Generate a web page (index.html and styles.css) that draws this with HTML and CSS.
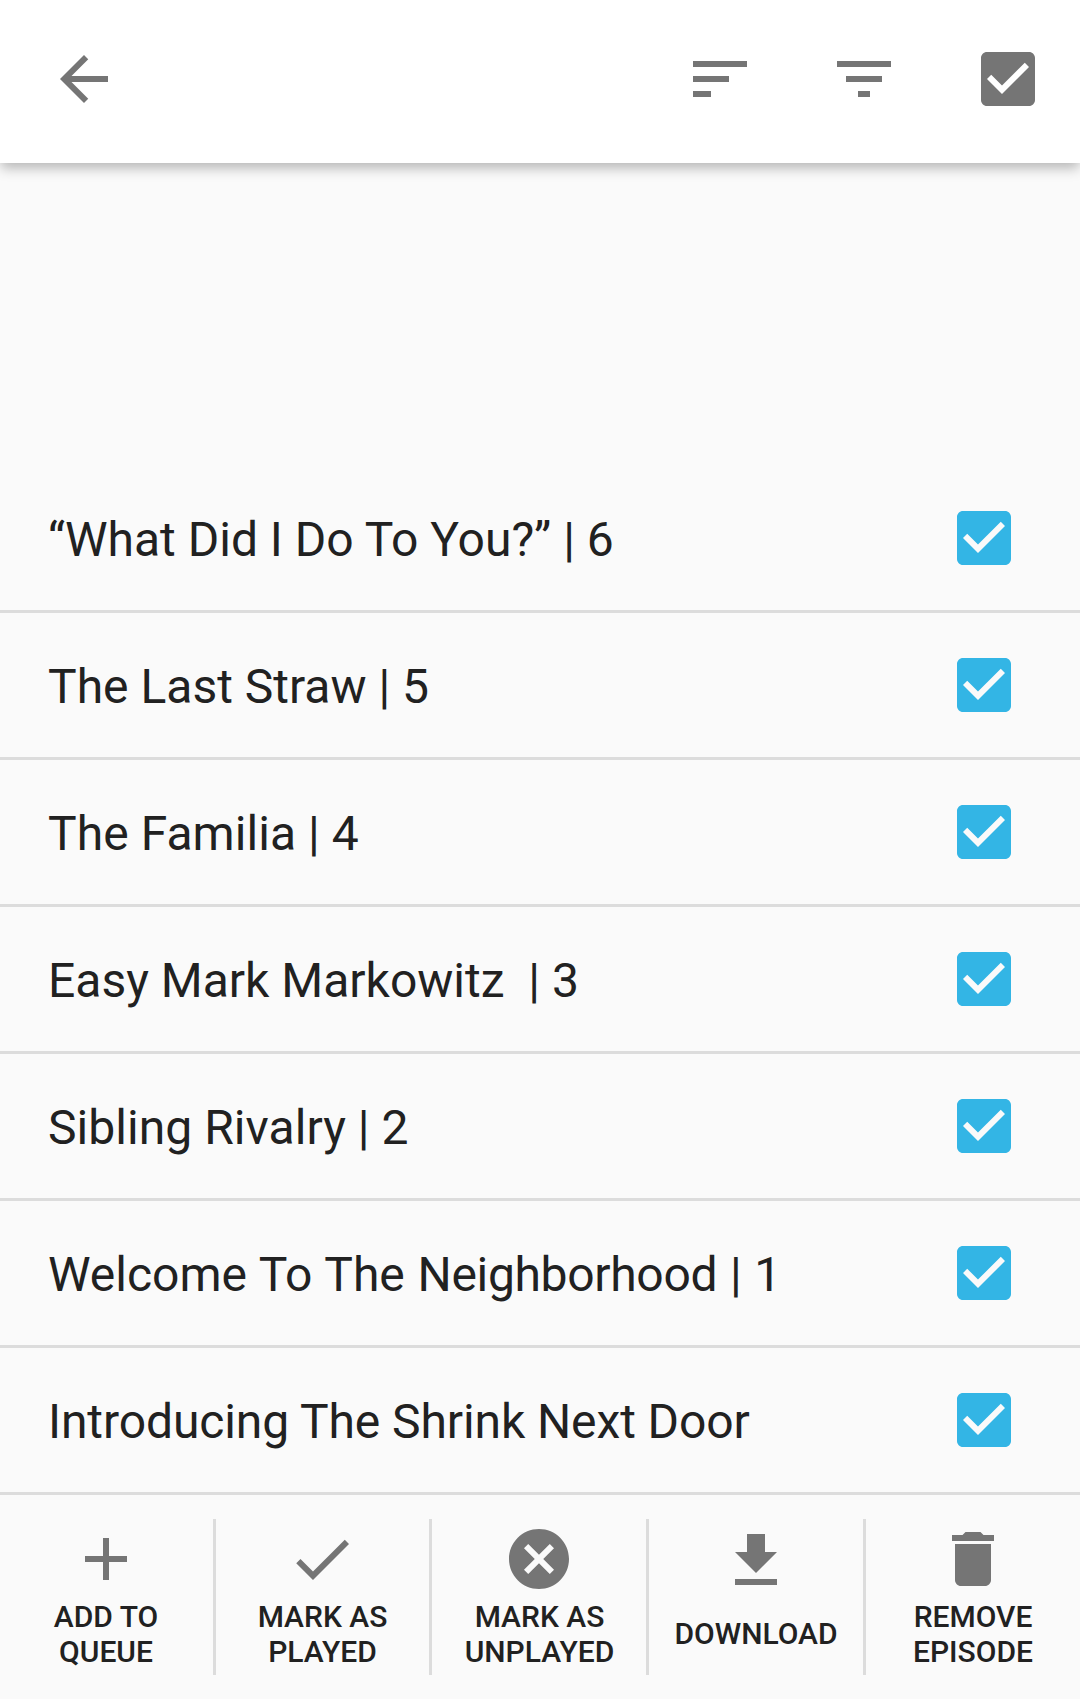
FILE: index.html
```html
<!DOCTYPE html>
<html lang="en">
<head>
<meta charset="utf-8">
<title>Episodes</title>
<link rel="stylesheet" href="styles.css">
</head>
<body>
<svg class="defs" aria-hidden="true">
  <symbol id="checkbox" viewBox="0 0 24 24"><path d="M19 3H5c-1.11 0-2 .9-2 2v14c0 1.1.89 2 2 2h14c1.11 0 2-.9 2-2V5c0-1.1-.89-2-2-2zm-9 14l-5-5 1.410-1.410L10 14.170l7.590-7.590L19 8l-9 9z"/></symbol>
</svg>
<header class="toolbar">
  <svg class="icon back" viewBox="0 0 24 24"><path d="M20 11H7.830l5.590-5.590L12 4l-8 8 8 8 1.410-1.410L7.830 13H20v-2z"/></svg>
  <svg class="icon" viewBox="0 0 24 24"><path d="M3 18h6v-2H3v2zM3 6v2h18V6H3zm0 7h12v-2H3v2z"/></svg>
  <svg class="icon" viewBox="0 0 24 24"><path d="M10 18h4v-2h-4v2zM3 6v2h18V6H3zm3 7h12v-2H6v2z"/></svg>
  <svg class="icon"><use href="#checkbox"/></svg>
</header>
<main class="episodes">
  <div class="row"><span class="title">“What Did I Do To You?” | 6</span><svg class="icon checked"><use href="#checkbox"/></svg></div>
  <div class="row"><span class="title">The Last Straw | 5</span><svg class="icon checked"><use href="#checkbox"/></svg></div>
  <div class="row"><span class="title loose">The Familia | 4</span><svg class="icon checked"><use href="#checkbox"/></svg></div>
  <div class="row"><span class="title">Easy Mark Markowitz  | 3</span><svg class="icon checked"><use href="#checkbox"/></svg></div>
  <div class="row"><span class="title loose">Sibling Rivalry | 2</span><svg class="icon checked"><use href="#checkbox"/></svg></div>
  <div class="row"><span class="title spaced">Welcome To The <span class="tighter">Neighborhood</span> | 1</span><svg class="icon checked"><use href="#checkbox"/></svg></div>
  <div class="row"><span class="title tight">Introducing The Shrink Next Door</span><svg class="icon checked"><use href="#checkbox"/></svg></div>
</main>
<footer class="actions">
  <div class="action add">
    <svg class="icon" viewBox="0 0 24 24"><path d="M19 13h-6v6h-2v-6H5v-2h6V5h2v6h6v2z"/></svg>
    <span class="label"><span>ADD TO<br>QUEUE</span></span>
  </div>
  <div class="action">
    <svg class="icon played" viewBox="0 0 24 24"><path d="M9 16.170L4.830 12l-1.420 1.410L9 19 21 7l-1.410-1.410z"/></svg>
    <span class="label"><span>MARK AS<br>PLAYED</span></span>
  </div>
  <div class="action">
    <svg class="icon" viewBox="0 0 24 24"><path d="M12 2C6.470 2 2 6.470 2 12s4.470 10 10 10 10-4.470 10-10S17.530 2 12 2zm5 13.590L15.590 17 12 13.410 8.410 17 7 15.590 10.590 12 7 8.410 8.410 7 12 10.590 15.590 7 17 8.410 13.410 12 17 15.590z"/></svg>
    <span class="label unplayed"><span>MARK AS<br>UNPLAYED</span></span>
  </div>
  <div class="action">
    <svg class="icon download" viewBox="0 0 24 24"><path d="M19 9h-4V3H9v6H5l7 7 7-7zM5 18v2h14v-2H5z"/></svg>
    <span class="label single"><span>DOWNLOAD</span></span>
  </div>
  <div class="action">
    <svg class="icon" viewBox="0 0 24 24"><path d="M6 19c0 1.100.9 2 2 2h8c1.100 0 2-.9 2-2V7H6v12zM19 4h-3.500l-1-1h-5l-1 1H5v2h14V4z"/></svg>
    <span class="label"><span>REMOVE<br>EPISODE</span></span>
  </div>
</footer>
</body>
</html>
```
FILE: styles.css
```css
* { box-sizing: border-box; }

body {
  margin: 0;
  width: 1080px;
  height: 1699px;
  overflow: hidden;
  display: flex;
  flex-direction: column;
  background: #fafafa;
  color: #212121;
  font-family: Roboto, sans-serif;
}

.defs { display: none; }

.icon {
  display: block;
  width: 72px;
  height: 72px;
  flex: none;
  fill: #757575;
}

.toolbar {
  height: 163px;
  flex: none;
  display: flex;
  align-items: flex-start;
  gap: 72px;
  padding: 43px 36px 0 48px;
  background: #fff;
  box-shadow: 0 6px 12px -1px rgba(0, 0, 0, 0.28);
}

.back { margin-right: auto; }

.episodes { padding-top: 303px; }

.row {
  height: 147px;
  display: flex;
  align-items: center;
  justify-content: space-between;
  padding: 0 60px 0 48px;
  border-bottom: 3px solid #dcdcdc;
}

.title {
  padding-top: 3px;
  font-size: 48px;
  line-height: 56px;
  white-space: pre;
}

.loose { letter-spacing: 0.05px; }
.tight { letter-spacing: -0.1px; }
.tighter { letter-spacing: -0.33px; }
.spaced { word-spacing: 0.8px; }

.checked { fill: #33b5e5; }

.actions {
  height: 204px;
  padding: 24px 0;
  display: grid;
  grid-template-columns: 216px 216px 217px 217px 214px;
}

.action {
  display: flex;
  flex-direction: column;
  align-items: center;
  padding-top: 4px;
  border-right: 3px solid #dcdcdc;
}

.action:last-child { border-right: 0; }

.add { padding-right: 1px; }

.played { margin-right: 1px; }

.label {
  height: 70px;
  margin-top: 4px;
  display: flex;
  align-items: center;
  text-align: center;
  font-size: 30px;
  line-height: 35px;
  font-weight: 500;
}

.unplayed { padding-left: 1px; }

.single { padding-bottom: 2px; }

.download { margin: 2px 0 -2px; }
```
